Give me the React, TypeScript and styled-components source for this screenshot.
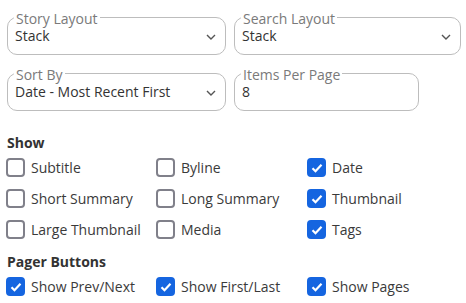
import React from 'react';
import styled, { createGlobalStyle } from 'styled-components';

const GlobalStyle = createGlobalStyle`
  body {
    margin: 0;
    background: #fff;
    font-family: 'Open Sans', 'Liberation Sans', sans-serif;
    color: #333;
  }
`;

const Page = styled.div`
  width: 466px;
  height: 303px;
  padding: 17px 5px 0 7px;
  box-sizing: border-box;
  overflow: hidden;
  display: flex;
  flex-direction: column;
`;

const FieldRow = styled.div`
  display: flex;
  gap: 8px;
  margin-bottom: 18px;
`;

const FieldBox = styled.div<{ $width: number }>`
  position: relative;
  width: ${({ $width }) => $width}px;
  height: 38px;
  box-sizing: border-box;
  border: 1px solid #bdbdbd;
  border-radius: 10px;
  padding: 8px 7px 0 7px;
  display: flex;
  align-items: flex-start;
  justify-content: space-between;
`;

const FieldLabel = styled.span`
  position: absolute;
  top: -5px;
  left: 6px;
  padding: 0 2px;
  background: #fff;
  font-size: 14px;
  line-height: 12px;
  color: #7a7a7a;
`;

const FieldValue = styled.span`
  font-size: 14px;
  line-height: 19px;
  color: #333;
`;

const Chevron = styled.svg`
  width: 10px;
  height: 6px;
  margin-top: 8px;
  margin-right: 2px;
`;

const SectionTitle = styled.div`
  font-size: 14px;
  font-weight: 700;
  line-height: 19px;
  color: #333;
  margin-top: 4px;
`;

const CheckGrid = styled.div`
  display: grid;
  grid-template-columns: 150px 151px 150px;
  grid-auto-rows: 31px;
  margin-bottom: 3px;
`;

const CheckItem = styled.label`
  display: flex;
  align-items: center;
  gap: 7px;
  font-size: 14px;
  color: #3a3a3a;
`;

const Box = styled.span<{ $checked: boolean }>`
  width: 19px;
  height: 19px;
  box-sizing: border-box;
  border-radius: 4px;
  border: 2px solid ${({ $checked }) => ($checked ? '#1565e0' : '#80808a')};
  background: ${({ $checked }) => ($checked ? '#1565e0' : '#fff')};
  display: flex;
  align-items: center;
  justify-content: center;
  margin-left: -1px;
  margin-right: -1px;
`;

const Select = ({ label, value, width }: { label: string; value: string; width: number }) => (
  <FieldBox $width={width}>
    <FieldLabel>{label}</FieldLabel>
    <FieldValue>{value}</FieldValue>
    <Chevron viewBox="0 0 10 6">
      <path d="M1 1 L5 5 L9 1" fill="none" stroke="#555" strokeWidth="1.4" />
    </Chevron>
  </FieldBox>
);

const Input = ({ label, value, width }: { label: string; value: string; width: number }) => (
  <FieldBox $width={width}>
    <FieldLabel>{label}</FieldLabel>
    <FieldValue>{value}</FieldValue>
  </FieldBox>
);

const Check = ({ label, checked }: { label: string; checked?: boolean }) => (
  <CheckItem>
    <Box $checked={!!checked}>
      {checked && (
        <svg width="12" height="10" viewBox="0 0 12 10">
          <path d="M1.5 5.2 L4.5 8.2 L10.5 1.8" fill="none" stroke="#fff" strokeWidth="2.2" />
        </svg>
      )}
    </Box>
    {label}
  </CheckItem>
);

export default function App() {
  return (
    <>
      <GlobalStyle />
      <Page>
        <FieldRow>
          <Select label="Story Layout" value="Stack" width={219} />
          <Select label="Search Layout" value="Stack" width={227} />
        </FieldRow>
        <FieldRow>
          <Select label="Sort By" value="Date - Most Recent First" width={219} />
          <Input label="Items Per Page" value="8" width={185} />
        </FieldRow>
        <SectionTitle>Show</SectionTitle>
        <CheckGrid>
          <Check label="Subtitle" />
          <Check label="Byline" />
          <Check label="Date" checked />
          <Check label="Short Summary" />
          <Check label="Long Summary" />
          <Check label="Thumbnail" checked />
          <Check label="Large Thumbnail" />
          <Check label="Media" />
          <Check label="Tags" checked />
        </CheckGrid>
        <SectionTitle>Pager Buttons</SectionTitle>
        <CheckGrid>
          <Check label="Show Prev/Next" checked />
          <Check label="Show First/Last" checked />
          <Check label="Show Pages" checked />
        </CheckGrid>
      </Page>
    </>
  );
}
